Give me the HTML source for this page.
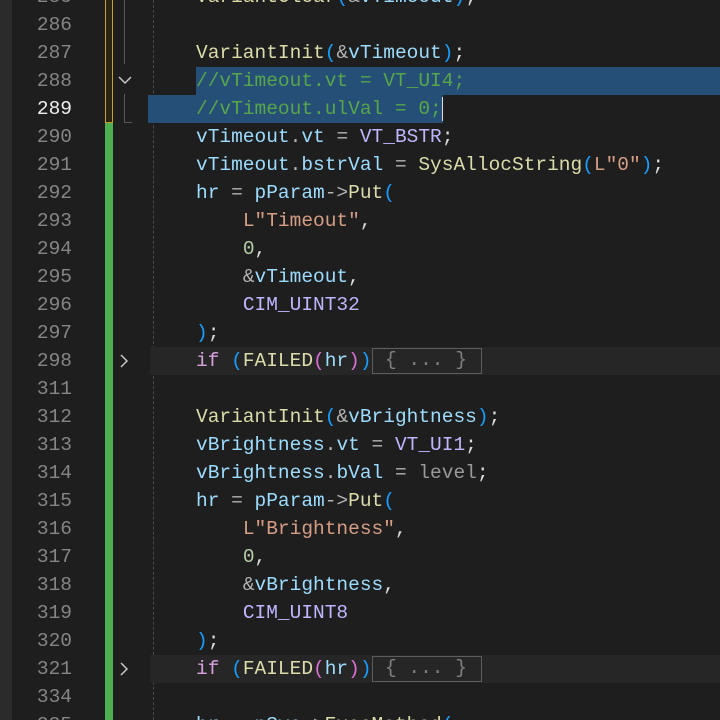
<!DOCTYPE html>
<html><head><meta charset="utf-8"><style>
html,body{margin:0;padding:0;width:720px;height:720px;overflow:hidden;background:#1e1e1e;position:relative}
.strip{position:absolute;left:0;top:0;width:12px;height:720px;background:#2b2b2b}
.row{position:absolute;left:0;width:720px;height:28px;font-family:"Liberation Mono",monospace;font-size:19.5px;line-height:28px;white-space:pre}
.ln{position:absolute;left:0;width:72px;text-align:right;color:#858585}
.code{position:absolute;left:196px;color:#dcdcdc}
.f{color:#dcdcaa}.v{color:#9cdcfe}.m{color:#beb7ff}.s{color:#d69d85}.n{color:#b5cea8}.k{color:#d8a0df}.c{color:#57a64a}.p{color:#b4b4b4}.b1{color:#179fff}.b2{color:#da70d6}.g{color:#9a9a9a}
.sel{position:absolute;height:28px;background:#264f78}
.hl{position:absolute;left:150px;width:570px;height:28px;background:#262626}
.box{position:absolute;border:1.5px solid #5d5d5d;color:#808080;height:26px;line-height:23px;box-sizing:border-box;padding:0 0 0 12px;font-family:"Liberation Mono",monospace;font-size:19.5px;white-space:pre}
</style></head><body>
<div class="strip"></div>
<div style="position:absolute;left:105px;top:0;width:8px;height:123px;background:#2a2410;border:1.5px solid #c9a227;border-top:none;box-sizing:border-box"></div>
<div style="position:absolute;left:105px;top:123px;width:8px;height:597px;background:#4caf50"></div>
<div style="position:absolute;left:124px;top:0;width:1px;height:64px;background:#555"></div>
<div style="position:absolute;left:124px;top:94px;width:1px;height:29px;background:#555"></div>
<div style="position:absolute;left:124px;top:122px;width:8px;height:1px;background:#555"></div>
<div style="position:absolute;left:153px;top:0;width:0;height:720px;border-left:1px dashed #4a4a4a"></div>
<div class="hl" style="top:347px"></div>
<div class="hl" style="top:655px"></div>
<div class="sel" style="left:196px;width:524px;top:67px"></div>
<div class="sel" style="left:148px;width:295px;top:95px"></div>
<div style="position:absolute;left:442px;top:97px;width:1px;height:24px;background:#ddd"></div>
<svg style="position:absolute;left:117px;top:74px" width="16" height="12"><path d="M2 3 L8 9 L14 3" stroke="#c8c8c8" stroke-width="1.5" fill="none"/></svg>
<svg style="position:absolute;left:118px;top:353px" width="12" height="16"><path d="M3 2 L9 8 L3 14" stroke="#c8c8c8" stroke-width="1.5" fill="none"/></svg>
<svg style="position:absolute;left:118px;top:661px" width="12" height="16"><path d="M3 2 L9 8 L3 14" stroke="#c8c8c8" stroke-width="1.5" fill="none"/></svg>

<div class="row" style="top:-17px"><span class="ln">285</span><span class="code"><span class="f">VariantClear</span><span class="b1">(</span><span class="p">&amp;</span><span class="v">vTimeout</span><span class="b1">)</span>;</span></div>
<div class="row" style="top:11px"><span class="ln">286</span></div>
<div class="row" style="top:39px"><span class="ln">287</span><span class="code"><span class="f">VariantInit</span><span class="b1">(</span><span class="p">&amp;</span><span class="v">vTimeout</span><span class="b1">)</span>;</span></div>
<div class="row" style="top:67px"><span class="ln">288</span><span class="code c">//vTimeout.vt = VT_UI4;</span></div>
<div class="row" style="top:95px"><span class="ln" style="color:#eee">289</span><span class="code c">//vTimeout.ulVal = 0;</span></div>
<div class="row" style="top:123px"><span class="ln">290</span><span class="code"><span class="v">vTimeout</span><span class="p">.</span><span class="v">vt</span> <span class="p">=</span> <span class="m">VT_BSTR</span>;</span></div>
<div class="row" style="top:151px"><span class="ln">291</span><span class="code"><span class="v">vTimeout</span><span class="p">.</span><span class="v">bstrVal</span> <span class="p">=</span> <span class="f">SysAllocString</span><span class="b1">(</span><span class="s">L"0"</span><span class="b1">)</span>;</span></div>
<div class="row" style="top:179px"><span class="ln">292</span><span class="code"><span class="v">hr</span> <span class="p">=</span> <span class="v">pParam</span><span class="p">-&gt;</span><span class="f">Put</span><span class="b1">(</span></span></div>
<div class="row" style="top:207px"><span class="ln">293</span><span class="code">    <span class="s">L"Timeout"</span>,</span></div>
<div class="row" style="top:235px"><span class="ln">294</span><span class="code">    <span class="n">0</span>,</span></div>
<div class="row" style="top:263px"><span class="ln">295</span><span class="code">    <span class="p">&amp;</span><span class="v">vTimeout</span>,</span></div>
<div class="row" style="top:291px"><span class="ln">296</span><span class="code">    <span class="m">CIM_UINT32</span></span></div>
<div class="row" style="top:319px"><span class="ln">297</span><span class="code"><span class="b1">)</span>;</span></div>
<div class="row" style="top:347px"><span class="ln">298</span><span class="code"><span class="k">if</span> <span class="b1">(</span><span class="f">FAILED</span><span class="b2">(</span><span class="v">hr</span><span class="b2">)</span><span class="b1">)</span></span></div>
<div class="box" style="left:372px;top:348px;width:110px">{ ... }</div>
<div class="row" style="top:375px"><span class="ln">311</span></div>
<div class="row" style="top:403px"><span class="ln">312</span><span class="code"><span class="f">VariantInit</span><span class="b1">(</span><span class="p">&amp;</span><span class="v">vBrightness</span><span class="b1">)</span>;</span></div>
<div class="row" style="top:431px"><span class="ln">313</span><span class="code"><span class="v">vBrightness</span><span class="p">.</span><span class="v">vt</span> <span class="p">=</span> <span class="m">VT_UI1</span>;</span></div>
<div class="row" style="top:459px"><span class="ln">314</span><span class="code"><span class="v">vBrightness</span><span class="p">.</span><span class="v">bVal</span> <span class="p">=</span> <span class="g">level</span>;</span></div>
<div class="row" style="top:487px"><span class="ln">315</span><span class="code"><span class="v">hr</span> <span class="p">=</span> <span class="v">pParam</span><span class="p">-&gt;</span><span class="f">Put</span><span class="b1">(</span></span></div>
<div class="row" style="top:515px"><span class="ln">316</span><span class="code">    <span class="s">L"Brightness"</span>,</span></div>
<div class="row" style="top:543px"><span class="ln">317</span><span class="code">    <span class="n">0</span>,</span></div>
<div class="row" style="top:571px"><span class="ln">318</span><span class="code">    <span class="p">&amp;</span><span class="v">vBrightness</span>,</span></div>
<div class="row" style="top:599px"><span class="ln">319</span><span class="code">    <span class="m">CIM_UINT8</span></span></div>
<div class="row" style="top:627px"><span class="ln">320</span><span class="code"><span class="b1">)</span>;</span></div>
<div class="row" style="top:655px"><span class="ln">321</span><span class="code"><span class="k">if</span> <span class="b1">(</span><span class="f">FAILED</span><span class="b2">(</span><span class="v">hr</span><span class="b2">)</span><span class="b1">)</span></span></div>
<div class="box" style="left:372px;top:656px;width:110px">{ ... }</div>
<div class="row" style="top:683px"><span class="ln">334</span></div>
<div class="row" style="top:711px;height:9px;overflow:hidden"><span class="ln">335</span><span class="code"><span class="v">hr</span> <span class="p">=</span> <span class="v">pSvc</span><span class="p">-&gt;</span><span class="f">ExecMethod</span><span class="b1">(</span></span></div>
</body></html>
